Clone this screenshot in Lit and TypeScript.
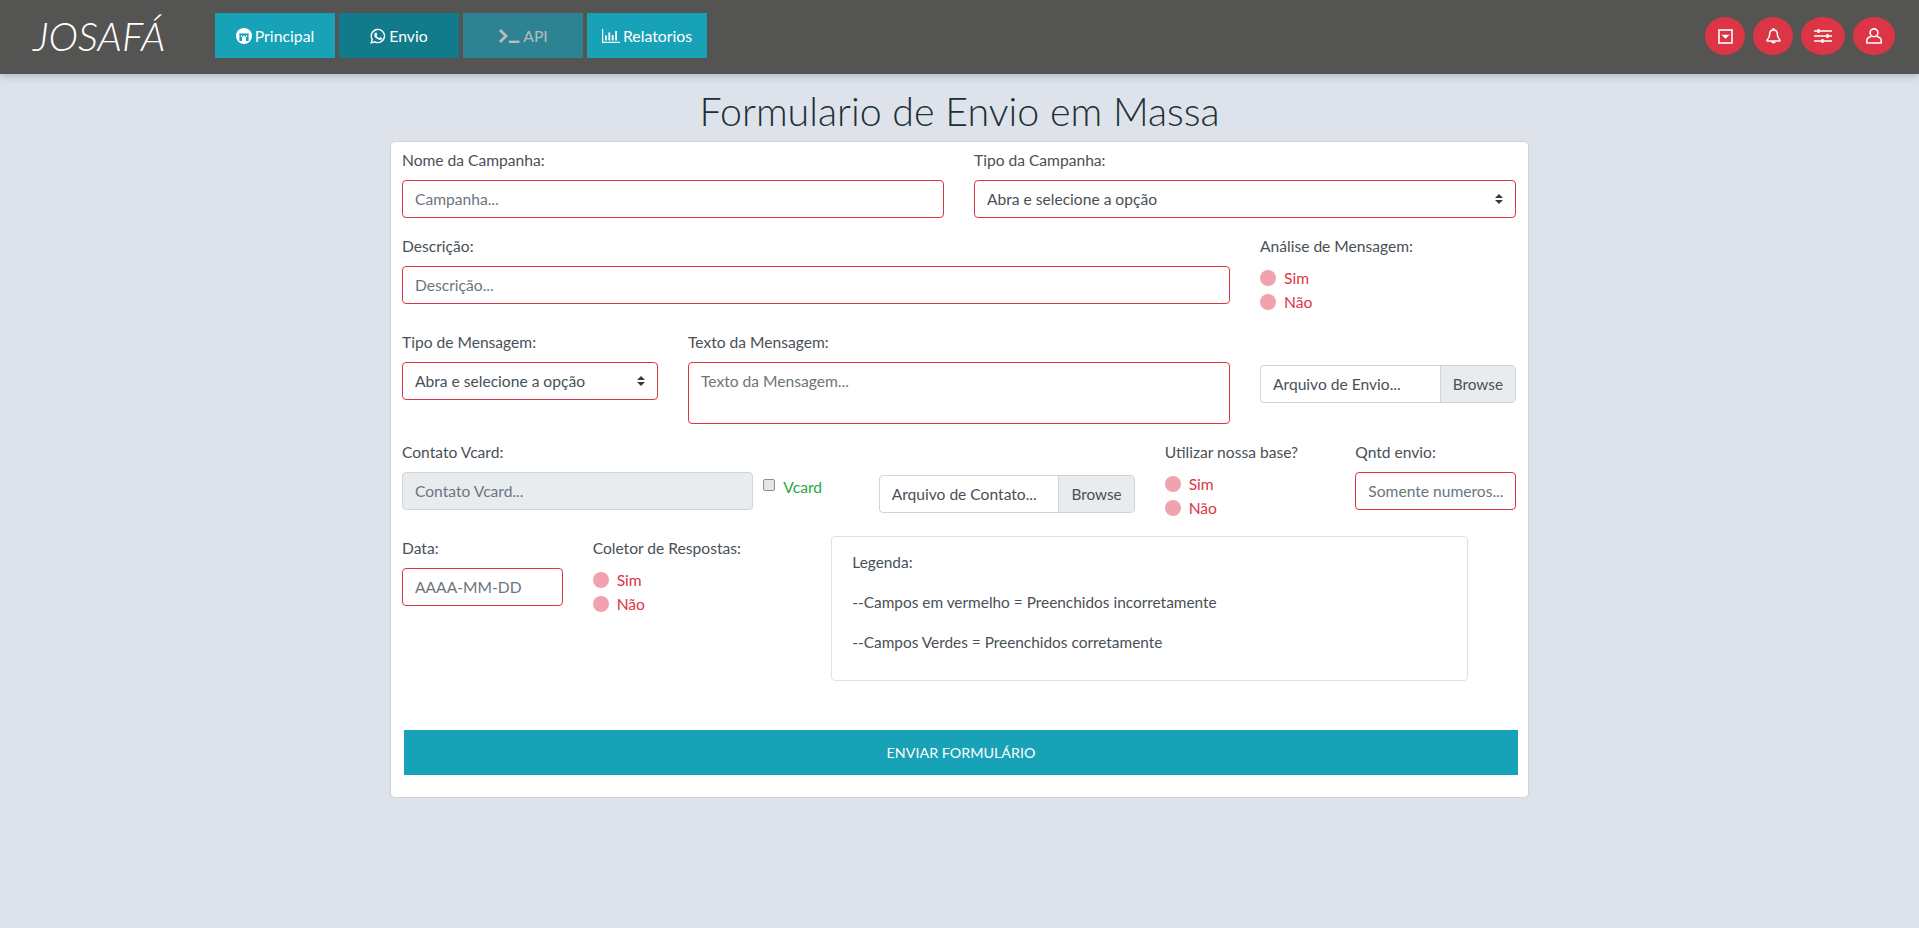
import { LitElement, html, css, svg } from "lit";
import { customElement } from "lit/decorators.js";

const FONT = `"Lato", "Noto Sans", sans-serif`;

const arrows = `url("data:image/svg+xml,%3csvg xmlns='http://www.w3.org/2000/svg' width='4' height='5' viewBox='0 0 4 5'%3e%3cpath fill='%23343a40' d='M2 0L0 2h4zm0 5L0 3h4z'/%3e%3c/svg%3e")`;

const ic = (w: number, h: number, vb: string, body: unknown) =>
  html`<svg class="ic" width=${w} height=${h} viewBox=${vb}>${body}</svg>`;

const iconFort = ic(16, 16, "0 0 16 16", svg`
  <circle cx="8" cy="8" r="8" fill="#fff"/>
  <path fill="#17a2b8" d="M3.400 13V5h1.200v1.100h1V5h1.100v1.100h.7V5h1.200v1.100h.7V5h1.100v1.100h1V5h1.200v8H10V10a2 2 0 0 0-4 0v3z"/>
  <path fill="#fff" d="M5 7.400h1.100v1.600H5zM9.900 7.400H11v1.600H9.900zM7.450 7.400h1.100v1.200h-1.100z"/>`);

const iconWa = ic(16, 16, "0 0 16 16", svg`
  <path fill="none" stroke="#fff" stroke-width="1.400" d="M1.200 14.800l1-3.500A6.600 6.600 0 1 1 4.800 13.800z"/>
  <path fill="#fff" d="M5.900 4.500c.3 0 .5 0 .6.3l.7 1.500c.1.200 0 .4-.1.600l-.5.600c-.1.100-.1.300 0 .4.600 1 1.300 1.600 2.400 2.100.2.100.3.100.4 0l.6-.7c.1-.2.300-.2.500-.1l1.400.7c.2.100.3.200.3.300 0 .7-.5 1.700-1.900 1.800-1 .1-2.400-.4-3.800-1.700C5 9.500 4.300 8.300 4.300 7.200c0-1.300.9-2.700 1.600-2.700z"/>`);

const iconTerm = ic(22, 16, "0 0 22 16", svg`
  <path fill="none" stroke="currentColor" stroke-width="2.800" d="M2 2l6 6-6 6"/>
  <rect x="11" y="12.600" width="10.500" height="2.400" fill="currentColor"/>`);

const iconChart = ic(18, 14, "0 0 18 14", svg`
  <path fill="#fff" d="M0 0h1.200v12.700H18V14H0zM3 6.500h1.800v5H3zM6.400 3.500h1.800v8H6.400zM9.800 6h1.800v5.500H9.800zM13.200 2h1.800v9.500h-1.800z"/>`);

const iconCaret = ic(15, 15, "0 0 15 15", svg`
  <rect x="1" y="1" width="13" height="13" fill="none" stroke="#fff" stroke-width="1.600"/>
  <path fill="#fff" d="M3.500 5.700h8L7.500 9.700z"/>`);

const iconBell = ic(15, 17, "0 0 15 17", svg`
  <path fill="none" stroke="#fff" stroke-width="1.500" stroke-linejoin="round" d="M7.500 2c-2.600 0-3.900 2-3.900 4.400 0 3-1.500 4.400-2.500 5.600v.9h12.800V12c-1-1.200-2.500-2.600-2.500-5.600C11.400 4 10.100 2 7.500 2z"/>
  <path fill="none" stroke="#fff" stroke-width="1.500" d="M5.800 13.500a1.800 1.800 0 0 0 3.400 0"/>
  <rect x="6.700" y="0" width="1.600" height="2.200" fill="#fff"/>`);

const iconSliders = ic(18, 14, "0 0 18 14", svg`
  <path fill="#fff" d="M0 1.200h18v1.600H0zM0 6.200h18v1.600H0zM0 11.200h18v1.600H0z"/>
  <path fill="#fff" d="M3.500 0h2v4h-2zM12.500 5h2v4h-2zM7.500 10h2v4h-2z"/>`);

const iconUser = ic(16, 16, "0 0 16 16", svg`
  <circle cx="8" cy="4.800" r="3.900" fill="none" stroke="#fff" stroke-width="1.600"/>
  <path fill="none" stroke="#fff" stroke-width="1.600" stroke-linejoin="round" d="M5.200 8.500C3 9 .8 10 .8 12.600V15h14.400v-2.400C15.200 10 13 9 10.800 8.500"/>`);

@customElement("app-root")
export class AppRoot extends LitElement {
  static styles = css`
    :host {
      display: block;
      height: 928px;
      overflow: hidden;
      background: #dee3eb;
      font-family: ${css([FONT] as unknown as TemplateStringsArray)};
      color: #495057;
      font-size: 15.6px;
      line-height: 24px;
    }
    * { box-sizing: border-box; }

    .nav {
      height: 74px;
      background: #545452;
      box-shadow: 0 2px 8px rgba(70, 80, 100, 0.3);
      display: flex;
      align-items: flex-start;
      padding: 13px 24px 0 33px;
      position: relative;
    }
    .logo {
      width: 182px;
      color: #fff;
      font-size: 40px;
      line-height: 46px;
      font-style: italic;
      font-weight: 300;
    }
    .menu { display: flex; gap: 4px; flex: 1; }
    .menu-btn {
      width: 120px;
      height: 45px;
      background: #17a2b8;
      color: #fff;
      display: flex;
      align-items: center;
      justify-content: center;
      gap: 3px;
      font-size: 15.8px;
    }
    .menu-btn.active { background: #117a8b; }
    .menu-btn.disabled { background: #2e8393; color: #b6bcbc; gap: 3px; }

    .tools { display: flex; gap: 8px; padding-top: 4px; }
    .tool {
      width: 40px;
      height: 38px;
      border-radius: 50%;
      background: #dc3545;
      display: flex;
      align-items: center;
      justify-content: center;
    }
    .tool.wide { width: 44px; }
    .tool.mid { width: 42px; }
    .ic { display: block; flex: none; }

    h1 {
      margin: 0;
      padding-top: 14px;
      height: 67px;
      text-align: center;
      font-size: 39.4px;
      line-height: 46px;
      font-weight: 300;
      color: #212f35;
    }

    .card {
      width: 1139px;
      height: 657px;
      margin-left: 390px;
      background: #fff;
      border: 1px solid #ced4da;
      border-radius: 5px;
      padding-top: 6px;
    }
    .row { display: flex; width: 1144px; margin-left: -4px; }
    .col { padding: 0 15px; flex: none; }
    .c1 { width: 95.33px; }
    .c2 { width: 190.67px; }
    .c3 { width: 286px; }
    .c4 { width: 381.33px; }
    .c6 { width: 572px; }
    .c9 { width: 858px; }

    .group { margin-bottom: 16px; }
    label, .lbl { display: block; margin-bottom: 8px; }

    .field {
      display: block;
      width: 100%;
      height: 38px;
      border: 1px solid #dc3545;
      border-radius: 4px;
      padding: 6px 12px;
      background: #fff;
      font: inherit;
      color: #495057;
      outline: none;
    }
    .field::placeholder { color: #6c757d; opacity: 1; }
    textarea.field { height: 62px; resize: none; }
    .field.off { background: #e9ecef; border-color: #ced4da; }
    select.field {
      appearance: none;
      background: #fff ${css([arrows] as unknown as TemplateStringsArray)} no-repeat right 12px center / 8px 10px;
    }

    .file {
      display: flex;
      height: 38px;
      margin-top: 11px;
      border: 1px solid #ced4da;
      border-radius: 4px;
      overflow: hidden;
    }
    .file-name { flex: 1; padding: 6px 12px; white-space: nowrap; overflow: hidden; }
    .file-btn {
      padding: 6px 12px;
      background: #e9ecef;
      border-left: 1px solid #ced4da;
      font-size: 15.3px;
    }

    .radio { display: flex; height: 24px; color: #dc3545; align-items: flex-start; gap: 8px; }
    .radio input {
      appearance: none;
      margin: 4px 0 0;
      width: 16px;
      height: 16px;
      border-radius: 50%;
      background: #f0a3ad;
    }

    .check {
      display: flex;
      gap: 7px;
      margin-left: -20px;
      padding-top: 35px;
      color: #28a745;
    }
    .check input {
      appearance: none;
      margin: 4px 1px 0 0;
      width: 12px;
      height: 12px;
      background: #e6e6e6;
      border: 1px solid #8f8f8f;
      border-radius: 2px;
    }

    .legend {
      flex: none;
      margin-left: 63px;
      width: 637px;
      height: 145px;
      border: 1px solid #dee2e6;
      border-radius: 4px;
      padding: 13px 20px;
      font-size: 15.4px;
    }
    .legend p { margin: 0 0 16px; }

    .send-wrap { padding: 49px 13px 0; }
    .send {
      display: block;
      width: 1114px;
      height: 45px;
      border: 0;
      background: #17a2b8;
      color: #fff;
      font: inherit;
      font-size: 14.3px;
      text-align: center;
    }
  `;

  private radios(name: string) {
    return html`
      <div class="radio"><input type="radio" name=${name} /><span>Sim</span></div>
      <div class="radio"><input type="radio" name=${name} /><span>Não</span></div>
    `;
  }

  render() {
    return html`
      <div class="nav">
        <div class="logo">JOSAFÁ</div>
        <div class="menu">
          <div class="menu-btn">${iconFort}<span>Principal</span></div>
          <div class="menu-btn active">${iconWa}<span>Envio</span></div>
          <div class="menu-btn disabled">${iconTerm}<span>API</span></div>
          <div class="menu-btn">${iconChart}<span>Relatorios</span></div>
        </div>
        <div class="tools">
          <div class="tool">${iconCaret}</div>
          <div class="tool">${iconBell}</div>
          <div class="tool wide">${iconSliders}</div>
          <div class="tool mid">${iconUser}</div>
        </div>
      </div>

      <h1>Formulario de Envio em Massa</h1>

      <div class="card">
        <div class="row">
          <div class="col c6 group">
            <label>Nome da Campanha:</label>
            <input class="field" placeholder="Campanha..." />
          </div>
          <div class="col c6 group">
            <label>Tipo da Campanha:</label>
            <select class="field"><option>Abra e selecione a opção</option></select>
          </div>
        </div>

        <div class="row">
          <div class="col c9 group">
            <label>Descrição:</label>
            <input class="field" placeholder="Descrição..." />
          </div>
          <div class="col c3 group">
            <div class="lbl">Análise de Mensagem:</div>
            ${this.radios("analise")}
          </div>
        </div>

        <div class="row">
          <div class="col c3 group">
            <label>Tipo de Mensagem:</label>
            <select class="field"><option>Abra e selecione a opção</option></select>
          </div>
          <div class="col c6 group">
            <label>Texto da Mensagem:</label>
            <textarea class="field" placeholder="Texto da Mensagem..."></textarea>
          </div>
          <div class="col c3 group">
            <div class="lbl">&nbsp;</div>
            <div class="file">
              <div class="file-name">Arquivo de Envio...</div>
              <div class="file-btn">Browse</div>
            </div>
          </div>
        </div>

        <div class="row">
          <div class="col c4 group">
            <label>Contato Vcard:</label>
            <input class="field off" placeholder="Contato Vcard..." disabled />
          </div>
          <div class="col c1 group">
            <div class="check"><input type="checkbox" /><span>Vcard</span></div>
          </div>
          <div class="col c3 group">
            <div class="lbl">&nbsp;</div>
            <div class="file">
              <div class="file-name">Arquivo de Contato...</div>
              <div class="file-btn">Browse</div>
            </div>
          </div>
          <div class="col c2 group">
            <div class="lbl">Utilizar nossa base?</div>
            ${this.radios("base")}
          </div>
          <div class="col c2 group">
            <label>Qntd envio:</label>
            <input class="field" placeholder="Somente numeros..." />
          </div>
        </div>

        <div class="row">
          <div class="col c2 group">
            <label>Data:</label>
            <input class="field" placeholder="AAAA-MM-DD" />
          </div>
          <div class="col c2 group">
            <div class="lbl">Coletor de Respostas:</div>
            ${this.radios("coletor")}
          </div>
          <div class="legend">
            <p>Legenda:</p>
            <p>--Campos em vermelho = Preenchidos incorretamente</p>
            <p>--Campos Verdes = Preenchidos corretamente</p>
          </div>
        </div>

        <div class="send-wrap"><button class="send">ENVIAR FORMULÁRIO</button></div>
      </div>
    `;
  }
}
